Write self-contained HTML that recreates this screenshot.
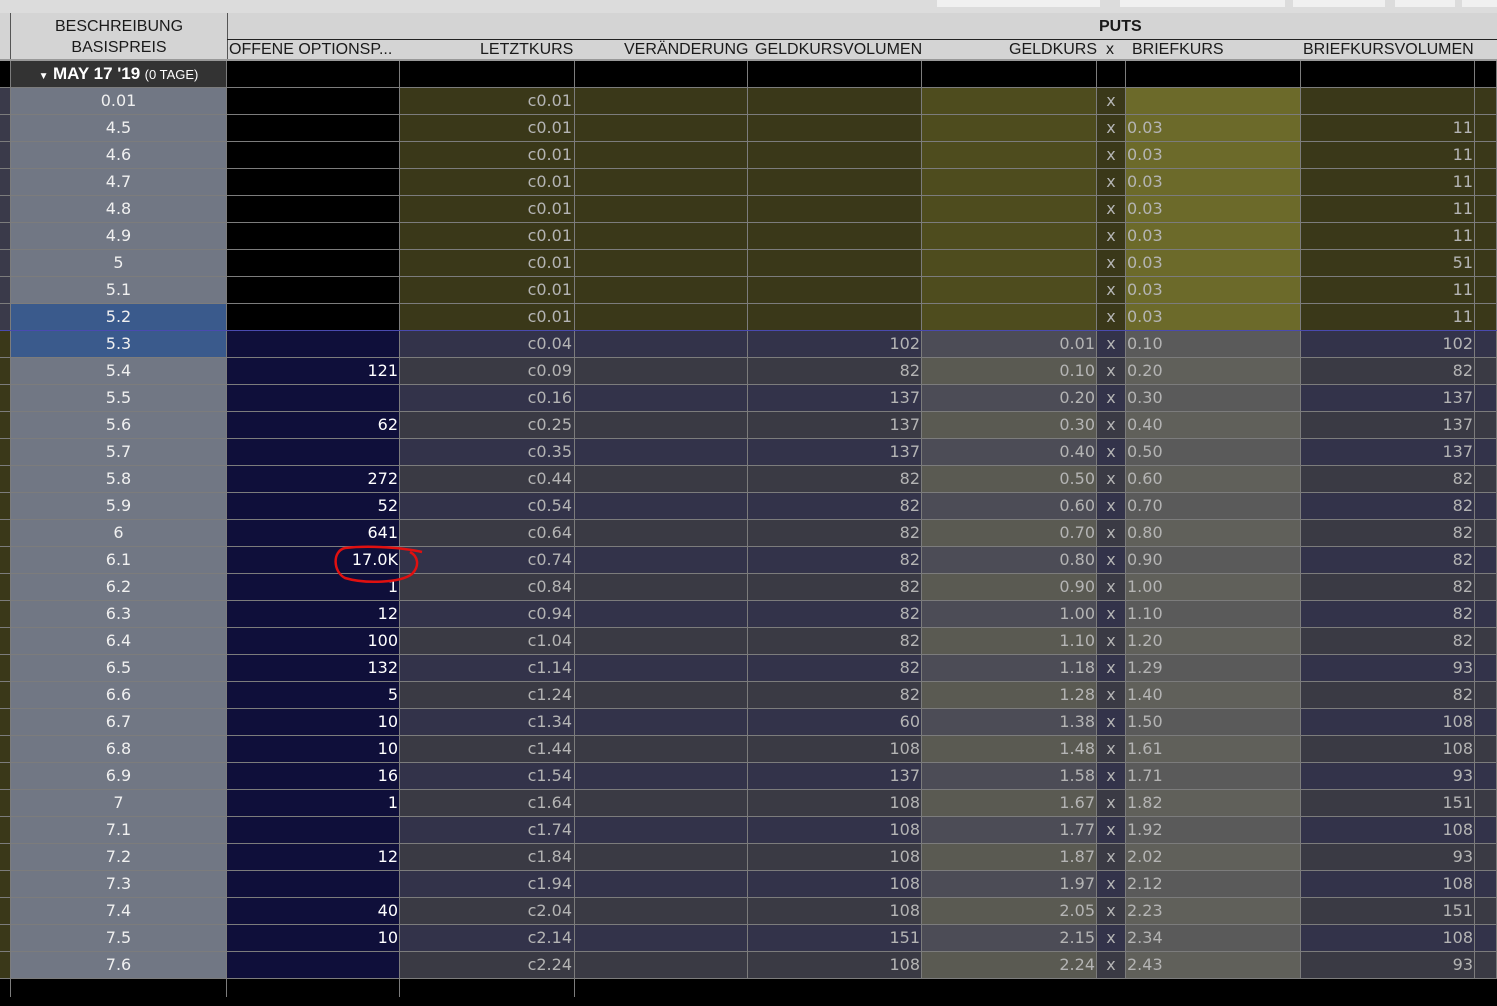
<!DOCTYPE html>
<html><head><meta charset="utf-8"><style>
*{margin:0;padding:0;box-sizing:border-box}
body{width:1497px;height:996px;overflow:hidden;background:#000;font-family:"DejaVu Sans","Liberation Sans",sans-serif;font-size:16px;position:relative}
#top{position:absolute;left:0;top:0;width:1497px;height:13px;background:#dcdcdc}
.tab{position:absolute;top:0;height:7px;background:#f0f0f0}
#hdr{position:absolute;left:0;top:13px;width:1497px;height:48px;background:#d4d4d4;color:#1a1a1a;font-family:"Liberation Sans",sans-serif;font-size:16px}
.h{position:absolute;white-space:nowrap}
.r{display:flex;height:27px;border-bottom:1px solid #7c7c7c;color:#b4b4b4;line-height:26px}
.r>div{border-right:1px solid #7c7c7c;height:26px;overflow:hidden;white-space:nowrap}
.w0{width:11px}.w1{width:216px;text-align:center;color:#f0f0f0}.w2{width:173px;text-align:right;padding-right:1px;color:#fff}
.w3{width:175px;text-align:right;padding-right:2px}.w4{width:173px}.w5{width:174px;text-align:right;padding-right:1px}
.w6{width:175px;text-align:right;padding-right:1px}.w7{width:29px;text-align:center}.w8{width:175px;padding-left:1px}
.w9{width:174px;text-align:right;padding-right:1px}.w10{width:22px}
.i .w0{background:#3a3a4a}.i .w1{background:#717784}.i .w2{background:#000}.i .w3,.i .w4,.i .w5,.i .w7,.i .w9,.i .w10{background:#3a3819}
.i .w6{background:#4e4c1e}.i .w8{background:#6c6a2a}
.o .w0{background:#3a3819}.o .w1{background:#717784}.o .w2{background:#0f0f3a}
.o .w3,.o .w4,.o .w5,.o .w7,.o .w9,.o .w10{background:#33334a}.o .w6{background:#4c4c56}.o .w8{background:#5a5a5a}
.o.e .w3,.o.e .w4,.o.e .w5,.o.e .w7,.o.e .w9,.o.e .w10{background:#3a3a44}.o.e .w6{background:#5a5a52}.o.e .w8{background:#60605a}
.s .w1{background:#3a5a8c!important}
#date .w1{background:#333;color:#fff;font-family:"Liberation Sans",sans-serif}
#date>div{background:#000}
</style></head><body>
<div id="top"><div class="tab" style="left:937px;width:163px"></div><div class="tab" style="left:1120px;width:165px"></div><div class="tab" style="left:1293px;width:92px"></div><div class="tab" style="left:1395px;width:60px"></div><div class="tab" style="left:1462px;width:35px"></div></div>
<div id="hdr">
<div style="position:absolute;left:10px;top:0;width:1px;height:48px;background:#555"></div>
<div style="position:absolute;left:227px;top:0;width:1px;height:48px;background:#555"></div>
<div style="position:absolute;left:227px;top:26px;width:1270px;height:1px;background:#222"></div>
<div style="position:absolute;left:0;top:46px;width:1497px;height:2px;background:#999"></div>
<div class="h" style="left:11px;width:216px;text-align:center;top:3px;line-height:21px">BESCHREIBUNG<br>BASISPREIS</div>
<div class="h" style="left:1099px;top:5px;font-weight:bold">PUTS</div>
<div class="h" style="left:229px;top:28px">OFFENE OPTIONSP...</div>
<div class="h" style="left:480px;top:28px">LETZTKURS</div>
<div class="h" style="left:624px;top:28px">VERÄNDERUNG</div>
<div class="h" style="left:755px;top:28px">GELDKURSVOLUMEN</div>
<div class="h" style="left:1009px;top:28px">GELDKURS</div>
<div class="h" style="left:1106px;top:28px">x</div>
<div class="h" style="left:1132px;top:28px">BRIEFKURS</div>
<div class="h" style="left:1303px;top:28px">BRIEFKURSVOLUMEN</div>
</div>
<div style="position:absolute;top:61px;left:0;width:1497px">
<div class="r" id="date"><div class="w0"></div><div class="w1"><span style="font-size:10px">▼</span> <b style="font-size:17px">MAY 17 '19</b> <span style="font-size:13px">(0 TAGE)</span></div><div class="w2"></div><div class="w3"></div><div class="w4"></div><div class="w5"></div><div class="w6"></div><div class="w7"></div><div class="w8"></div><div class="w9"></div><div class="w10"></div></div>
<div class="r i"><div class="w0"></div><div class="w1">0.01</div><div class="w2"></div><div class="w3">c0.01</div><div class="w4"></div><div class="w5"></div><div class="w6"></div><div class="w7">x</div><div class="w8"></div><div class="w9"></div><div class="w10"></div></div>
<div class="r i"><div class="w0"></div><div class="w1">4.5</div><div class="w2"></div><div class="w3">c0.01</div><div class="w4"></div><div class="w5"></div><div class="w6"></div><div class="w7">x</div><div class="w8">0.03</div><div class="w9">11</div><div class="w10"></div></div>
<div class="r i"><div class="w0"></div><div class="w1">4.6</div><div class="w2"></div><div class="w3">c0.01</div><div class="w4"></div><div class="w5"></div><div class="w6"></div><div class="w7">x</div><div class="w8">0.03</div><div class="w9">11</div><div class="w10"></div></div>
<div class="r i"><div class="w0"></div><div class="w1">4.7</div><div class="w2"></div><div class="w3">c0.01</div><div class="w4"></div><div class="w5"></div><div class="w6"></div><div class="w7">x</div><div class="w8">0.03</div><div class="w9">11</div><div class="w10"></div></div>
<div class="r i"><div class="w0"></div><div class="w1">4.8</div><div class="w2"></div><div class="w3">c0.01</div><div class="w4"></div><div class="w5"></div><div class="w6"></div><div class="w7">x</div><div class="w8">0.03</div><div class="w9">11</div><div class="w10"></div></div>
<div class="r i"><div class="w0"></div><div class="w1">4.9</div><div class="w2"></div><div class="w3">c0.01</div><div class="w4"></div><div class="w5"></div><div class="w6"></div><div class="w7">x</div><div class="w8">0.03</div><div class="w9">11</div><div class="w10"></div></div>
<div class="r i"><div class="w0"></div><div class="w1">5</div><div class="w2"></div><div class="w3">c0.01</div><div class="w4"></div><div class="w5"></div><div class="w6"></div><div class="w7">x</div><div class="w8">0.03</div><div class="w9">51</div><div class="w10"></div></div>
<div class="r i"><div class="w0"></div><div class="w1">5.1</div><div class="w2"></div><div class="w3">c0.01</div><div class="w4"></div><div class="w5"></div><div class="w6"></div><div class="w7">x</div><div class="w8">0.03</div><div class="w9">11</div><div class="w10"></div></div>
<div class="r i s" style="border-bottom-color:#4a4ab0"><div class="w0"></div><div class="w1">5.2</div><div class="w2"></div><div class="w3">c0.01</div><div class="w4"></div><div class="w5"></div><div class="w6"></div><div class="w7">x</div><div class="w8">0.03</div><div class="w9">11</div><div class="w10"></div></div>
<div class="r o s"><div class="w0"></div><div class="w1">5.3</div><div class="w2"></div><div class="w3">c0.04</div><div class="w4"></div><div class="w5">102</div><div class="w6">0.01</div><div class="w7">x</div><div class="w8">0.10</div><div class="w9">102</div><div class="w10"></div></div>
<div class="r o e"><div class="w0"></div><div class="w1">5.4</div><div class="w2">121</div><div class="w3">c0.09</div><div class="w4"></div><div class="w5">82</div><div class="w6">0.10</div><div class="w7">x</div><div class="w8">0.20</div><div class="w9">82</div><div class="w10"></div></div>
<div class="r o"><div class="w0"></div><div class="w1">5.5</div><div class="w2"></div><div class="w3">c0.16</div><div class="w4"></div><div class="w5">137</div><div class="w6">0.20</div><div class="w7">x</div><div class="w8">0.30</div><div class="w9">137</div><div class="w10"></div></div>
<div class="r o e"><div class="w0"></div><div class="w1">5.6</div><div class="w2">62</div><div class="w3">c0.25</div><div class="w4"></div><div class="w5">137</div><div class="w6">0.30</div><div class="w7">x</div><div class="w8">0.40</div><div class="w9">137</div><div class="w10"></div></div>
<div class="r o"><div class="w0"></div><div class="w1">5.7</div><div class="w2"></div><div class="w3">c0.35</div><div class="w4"></div><div class="w5">137</div><div class="w6">0.40</div><div class="w7">x</div><div class="w8">0.50</div><div class="w9">137</div><div class="w10"></div></div>
<div class="r o e"><div class="w0"></div><div class="w1">5.8</div><div class="w2">272</div><div class="w3">c0.44</div><div class="w4"></div><div class="w5">82</div><div class="w6">0.50</div><div class="w7">x</div><div class="w8">0.60</div><div class="w9">82</div><div class="w10"></div></div>
<div class="r o"><div class="w0"></div><div class="w1">5.9</div><div class="w2">52</div><div class="w3">c0.54</div><div class="w4"></div><div class="w5">82</div><div class="w6">0.60</div><div class="w7">x</div><div class="w8">0.70</div><div class="w9">82</div><div class="w10"></div></div>
<div class="r o e"><div class="w0"></div><div class="w1">6</div><div class="w2">641</div><div class="w3">c0.64</div><div class="w4"></div><div class="w5">82</div><div class="w6">0.70</div><div class="w7">x</div><div class="w8">0.80</div><div class="w9">82</div><div class="w10"></div></div>
<div class="r o"><div class="w0"></div><div class="w1">6.1</div><div class="w2">17.0K</div><div class="w3">c0.74</div><div class="w4"></div><div class="w5">82</div><div class="w6">0.80</div><div class="w7">x</div><div class="w8">0.90</div><div class="w9">82</div><div class="w10"></div></div>
<div class="r o e"><div class="w0"></div><div class="w1">6.2</div><div class="w2">1</div><div class="w3">c0.84</div><div class="w4"></div><div class="w5">82</div><div class="w6">0.90</div><div class="w7">x</div><div class="w8">1.00</div><div class="w9">82</div><div class="w10"></div></div>
<div class="r o"><div class="w0"></div><div class="w1">6.3</div><div class="w2">12</div><div class="w3">c0.94</div><div class="w4"></div><div class="w5">82</div><div class="w6">1.00</div><div class="w7">x</div><div class="w8">1.10</div><div class="w9">82</div><div class="w10"></div></div>
<div class="r o e"><div class="w0"></div><div class="w1">6.4</div><div class="w2">100</div><div class="w3">c1.04</div><div class="w4"></div><div class="w5">82</div><div class="w6">1.10</div><div class="w7">x</div><div class="w8">1.20</div><div class="w9">82</div><div class="w10"></div></div>
<div class="r o"><div class="w0"></div><div class="w1">6.5</div><div class="w2">132</div><div class="w3">c1.14</div><div class="w4"></div><div class="w5">82</div><div class="w6">1.18</div><div class="w7">x</div><div class="w8">1.29</div><div class="w9">93</div><div class="w10"></div></div>
<div class="r o e"><div class="w0"></div><div class="w1">6.6</div><div class="w2">5</div><div class="w3">c1.24</div><div class="w4"></div><div class="w5">82</div><div class="w6">1.28</div><div class="w7">x</div><div class="w8">1.40</div><div class="w9">82</div><div class="w10"></div></div>
<div class="r o"><div class="w0"></div><div class="w1">6.7</div><div class="w2">10</div><div class="w3">c1.34</div><div class="w4"></div><div class="w5">60</div><div class="w6">1.38</div><div class="w7">x</div><div class="w8">1.50</div><div class="w9">108</div><div class="w10"></div></div>
<div class="r o e"><div class="w0"></div><div class="w1">6.8</div><div class="w2">10</div><div class="w3">c1.44</div><div class="w4"></div><div class="w5">108</div><div class="w6">1.48</div><div class="w7">x</div><div class="w8">1.61</div><div class="w9">108</div><div class="w10"></div></div>
<div class="r o"><div class="w0"></div><div class="w1">6.9</div><div class="w2">16</div><div class="w3">c1.54</div><div class="w4"></div><div class="w5">137</div><div class="w6">1.58</div><div class="w7">x</div><div class="w8">1.71</div><div class="w9">93</div><div class="w10"></div></div>
<div class="r o e"><div class="w0"></div><div class="w1">7</div><div class="w2">1</div><div class="w3">c1.64</div><div class="w4"></div><div class="w5">108</div><div class="w6">1.67</div><div class="w7">x</div><div class="w8">1.82</div><div class="w9">151</div><div class="w10"></div></div>
<div class="r o"><div class="w0"></div><div class="w1">7.1</div><div class="w2"></div><div class="w3">c1.74</div><div class="w4"></div><div class="w5">108</div><div class="w6">1.77</div><div class="w7">x</div><div class="w8">1.92</div><div class="w9">108</div><div class="w10"></div></div>
<div class="r o e"><div class="w0"></div><div class="w1">7.2</div><div class="w2">12</div><div class="w3">c1.84</div><div class="w4"></div><div class="w5">108</div><div class="w6">1.87</div><div class="w7">x</div><div class="w8">2.02</div><div class="w9">93</div><div class="w10"></div></div>
<div class="r o"><div class="w0"></div><div class="w1">7.3</div><div class="w2"></div><div class="w3">c1.94</div><div class="w4"></div><div class="w5">108</div><div class="w6">1.97</div><div class="w7">x</div><div class="w8">2.12</div><div class="w9">108</div><div class="w10"></div></div>
<div class="r o e"><div class="w0"></div><div class="w1">7.4</div><div class="w2">40</div><div class="w3">c2.04</div><div class="w4"></div><div class="w5">108</div><div class="w6">2.05</div><div class="w7">x</div><div class="w8">2.23</div><div class="w9">151</div><div class="w10"></div></div>
<div class="r o"><div class="w0"></div><div class="w1">7.5</div><div class="w2">10</div><div class="w3">c2.14</div><div class="w4"></div><div class="w5">151</div><div class="w6">2.15</div><div class="w7">x</div><div class="w8">2.34</div><div class="w9">108</div><div class="w10"></div></div>
<div class="r o e"><div class="w0"></div><div class="w1">7.6</div><div class="w2"></div><div class="w3">c2.24</div><div class="w4"></div><div class="w5">108</div><div class="w6">2.24</div><div class="w7">x</div><div class="w8">2.43</div><div class="w9">93</div><div class="w10"></div></div>
<div class="r" style="border:none"><div class="w0" style="height:18px"></div><div class="w1" style="height:18px"></div><div class="w2" style="height:18px"></div><div class="w3" style="height:18px"></div><div class="w4" style="height:18px;border:none"></div><div class="w5" style="height:18px;border:none"></div></div>
</div>
<svg style="position:absolute;left:0;top:0" width="1497" height="996"><path d="M422 552 C405 548 370 545 345 548 C332 551 333 572 345 578 C365 584 400 583 412 574 C420 566 418 556 410 552" fill="none" stroke="#e01010" stroke-width="2.5"/></svg>
</body></html>
